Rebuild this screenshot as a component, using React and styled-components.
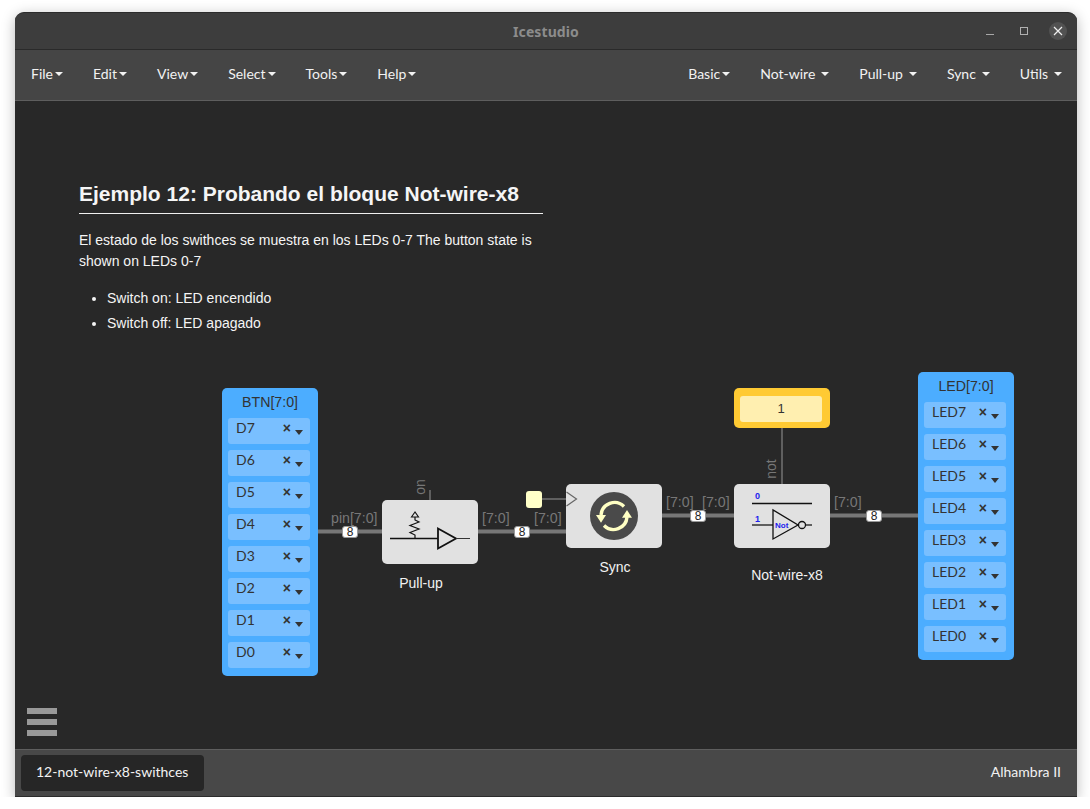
import React from 'react';
import styled, { createGlobalStyle } from 'styled-components';

const LEFT_MENU = ['File', 'Edit', 'View', 'Select', 'Tools', 'Help'];
const RIGHT_MENU = [
  { name: 'Basic', spaced: false },
  { name: 'Not-wire', spaced: true },
  { name: 'Pull-up', spaced: true },
  { name: 'Sync', spaced: true },
  { name: 'Utils', spaced: true },
];
const BTN_PINS = ['D7', 'D6', 'D5', 'D4', 'D3', 'D2', 'D1', 'D0'];
const LED_PINS = ['LED7', 'LED6', 'LED5', 'LED4', 'LED3', 'LED2', 'LED1', 'LED0'];

const BUS_LABELS = [
  { text: 'pin[7:0]', x: 316, y: 408 },
  { text: '[7:0]', x: 467, y: 408 },
  { text: '[7:0]', x: 519, y: 408 },
  { text: '[7:0]', x: 651, y: 392 },
  { text: '[7:0]', x: 687, y: 392 },
  { text: '[7:0]', x: 819, y: 392 },
];
const BADGES = [
  { x: 327, y: 425 },
  { x: 499, y: 425 },
  { x: 675, y: 409 },
  { x: 851, y: 409 },
];

const GlobalStyle = createGlobalStyle`
  html, body {
    margin: 0;
    padding: 0;
    background: #fff;
  }
  * {
    box-sizing: border-box;
  }
`;

function Wires() {
  return (
    <WireLayer width="1060" height="648" viewBox="0 0 1060 648">
      <g stroke="#777" strokeWidth="4" fill="none">
        <path d="M303 430.500H367" />
        <path d="M463 430.500H551" />
        <path d="M647 414.500H719" />
        <path d="M815 414.500H903" />
      </g>
      <g stroke="#5f5f5f" strokeWidth="2" fill="none">
        <path d="M415 389V399" />
        <path d="M767 327V383" />
        <path d="M527 398H551" />
      </g>
    </WireLayer>
  );
}

function PortBlock({ title, pins, x, y }) {
  return (
    <Port $x={x} $y={y}>
      <PortTitle>{title}</PortTitle>
      {pins.map((pin) => (
        <PinRow key={pin}>
          <PinName>{pin}</PinName>
          <PinClear>×</PinClear>
          <PinCaret />
        </PinRow>
      ))}
    </Port>
  );
}

function PullUpIcon() {
  return (
    <svg width="96" height="64" viewBox="0 0 96 64">
      <g fill="none" stroke="#111">
        <path d="M8 38.500H56" strokeWidth="1.500" />
        <path d="M56 28.500V48.500L74 38.500Z" strokeWidth="1.800" />
        <path d="M74 38.500H88" strokeWidth="1" stroke="#333" />
        <path d="M33 38V35L28 32.500L37 29L28 25.500L37 22L33 20V17" strokeWidth="1.200" />
        <path d="M33 12L29.500 17H36.500Z" strokeWidth="1.100" />
      </g>
    </svg>
  );
}

function SyncIcon() {
  return (
    <svg width="48" height="48" viewBox="0 0 48 48">
      <circle cx="24" cy="24" r="24" fill="#4a4a4a" />
      <g fill="none" stroke="#ffffc4" strokeWidth="3.400">
        <path d="M11 23A13.500 13.500 0 0 1 34 14.500" />
        <path d="M37 25A13.500 13.500 0 0 1 14 33.500" />
      </g>
      <path d="M6 23H16L11 30.700Z" fill="#ffffc4" />
      <path d="M32 25.700H42L37 18Z" fill="#ffffc4" />
    </svg>
  );
}

function NotIcon() {
  return (
    <svg width="96" height="64" viewBox="0 0 96 64">
      <path d="M18 19.500H78" stroke="#111" strokeWidth="1.300" fill="none" />
      <path d="M18 41H39" stroke="#333" strokeWidth="1.500" fill="none" />
      <path d="M39 26V55L64 41Z" stroke="#111" strokeWidth="1.300" fill="none" />
      <circle cx="68" cy="41" r="3.500" stroke="#111" strokeWidth="1.300" fill="none" />
      <path d="M72 41H78" stroke="#333" strokeWidth="1.500" fill="none" />
      <SvgBlue x="21" y="15" $size={9}>0</SvgBlue>
      <SvgBlue x="21" y="38" $size={9}>1</SvgBlue>
      <SvgBlue x="41" y="44" $size={8}>Not</SvgBlue>
    </svg>
  );
}

export default function App() {
  return (
    <>
      <GlobalStyle />
      <Window>
        <TitleBar>
          <AppTitle>Icestudio</AppTitle>
          <WindowControls>
            <MinimizeBtn />
            <MaximizeBtn />
            <CloseBtn>
              <svg width="10" height="10" viewBox="0 0 10 10">
                <path d="M1 1L9 9M9 1L1 9" stroke="#f0f0f0" strokeWidth="1.200" />
              </svg>
            </CloseBtn>
          </WindowControls>
        </TitleBar>
        <MenuBar>
          <MenuGroup $inset>
            {LEFT_MENU.map((item) => (
              <MenuItem key={item}>
                {item}
                <Caret />
              </MenuItem>
            ))}
          </MenuGroup>
          <MenuGroup>
            {RIGHT_MENU.map(({ name, spaced }) => (
              <MenuItem key={name} $spaced={spaced}>
                {name}
                <Caret />
              </MenuItem>
            ))}
          </MenuGroup>
        </MenuBar>
        <Canvas>
          <Wires />
          <Note>
            <NoteTitle>Ejemplo 12: Probando el bloque Not-wire-x8</NoteTitle>
            <NoteText>
              El estado de los swithces se muestra en los LEDs 0-7 The button state is shown on
              LEDs 0-7
            </NoteText>
            <NoteList>
              <li>Switch on: LED encendido</li>
              <li>Switch off: LED apagado</li>
            </NoteList>
          </Note>

          <PortBlock title="BTN[7:0]" pins={BTN_PINS} x={207} y={287} />
          <PortBlock title="LED[7:0]" pins={LED_PINS} x={903} y={271} />

          <Constant>
            <ConstantValue>1</ConstantValue>
          </Constant>

          <Chip $x={367} $y={399}>
            <PullUpIcon />
          </Chip>
          <Chip $x={551} $y={383}>
            <SyncIcon />
          </Chip>
          <Chip $x={719} $y={383}>
            <NotIcon />
          </Chip>

          <ChipLabel $x={406} $y={473}>Pull-up</ChipLabel>
          <ChipLabel $x={600} $y={457}>Sync</ChipLabel>
          <ChipLabel $x={772} $y={465}>Not-wire-x8</ChipLabel>

          {BUS_LABELS.map(({ text, x, y }) => (
            <BusLabel key={`${text}-${x}`} $x={x} $y={y}>
              {text}
            </BusLabel>
          ))}
          <SideLabel $x={405} $y={378}>on</SideLabel>
          <SideLabel $x={756} $y={360}>not</SideLabel>

          {BADGES.map(({ x, y }) => (
            <Badge key={x} $x={x} $y={y}>
              8
            </Badge>
          ))}

          <ClockSource />
          <ClockArrow width="12" height="16" viewBox="0 0 12 16">
            <path d="M0.500 1L10.500 8L0.500 15" fill="none" stroke="#666" strokeWidth="1.200" />
          </ClockArrow>

          <Hamburger>
            <span />
            <span />
            <span />
          </Hamburger>
        </Canvas>
        <Footer>
          <FileTab>12-not-wire-x8-swithces</FileTab>
          <BoardName>Alhambra II</BoardName>
        </Footer>
      </Window>
    </>
  );
}

const Window = styled.div`
  margin: 12px 0 0 15px;
  width: 1062px;
  height: 785px;
  display: flex;
  flex-direction: column;
  overflow: hidden;
  border-radius: 9px 9px 0 0;
  box-shadow: 0 3px 14px rgba(0, 0, 0, 0.28);
  background: #282828;
  border-top: 1px solid #2c2c2c;
  border-bottom: 1px solid #2c2c2c;
`;
const TitleBar = styled.div`
  position: relative;
  height: 37px;
  flex: none;
  display: flex;
  align-items: center;
  justify-content: center;
  background: #3d3d3d;
  border-bottom: 1px solid #2a2a2a;
`;
const AppTitle = styled.div`
  font-family: 'Noto Sans', sans-serif;
  font-size: 14px;
  font-weight: 700;
  color: #8c8c8c;
  letter-spacing: 0.1px;
`;
const WindowControls = styled.div`
  position: absolute;
  right: 0;
  top: 0;
  bottom: 0;
  display: flex;
  align-items: center;
  padding-right: 10px;
`;
const MinimizeBtn = styled.span`
  display: block;
  width: 8px;
  height: 1px;
  margin: 6px 26px 0 0;
  background: #a8a8a8;
`;
const MaximizeBtn = styled.span`
  display: block;
  width: 8px;
  height: 8px;
  margin-right: 21px;
  border: 1px solid #b0b0b0;
`;
const CloseBtn = styled.span`
  width: 18px;
  height: 18px;
  border-radius: 50%;
  background: #525252;
  display: flex;
  align-items: center;
  justify-content: center;
`;
const MenuBar = styled.div`
  height: 51px;
  flex: none;
  display: flex;
  justify-content: space-between;
  background: #454545;
  border-bottom: 1px solid #5e5e5e;
`;
const MenuGroup = styled.div`
  display: flex;
  padding-left: ${(p) => (p.$inset ? '1px' : '0')};
`;
const MenuItem = styled.div`
  display: flex;
  align-items: center;
  padding: 0 15px 4px;
  font-family: 'Lato', sans-serif;
  font-size: 14px;
  color: #f2f2f2;
  & > span {
    margin-left: ${(p) => (p.$spaced ? '6px' : '2px')};
  }
`;
const Caret = styled.span`
  display: inline-block;
  width: 0;
  height: 0;
  margin-top: 2px;
  border-top: 4px solid #f2f2f2;
  border-left: 4px solid transparent;
  border-right: 4px solid transparent;
`;
const Canvas = styled.div`
  position: relative;
  flex: 1;
  background: #282828;
`;
const WireLayer = styled.svg`
  position: absolute;
  left: 0;
  top: 0;
`;
const Note = styled.div`
  position: absolute;
  left: 64px;
  top: 80px;
  width: 464px;
  font-family: 'Liberation Sans', sans-serif;
  font-size: 14px;
  line-height: 21px;
  color: #f5f5f5;
`;
const NoteTitle = styled.h1`
  margin: 0 0 16px;
  padding-bottom: 6px;
  font-size: 21px;
  line-height: 26px;
  font-weight: 700;
  border-bottom: 1px solid #f0f0f0;
`;
const NoteText = styled.p`
  margin: 0 0 16px;
`;
const NoteList = styled.ul`
  margin: 0;
  padding-left: 28px;
  li {
    margin-bottom: 4px;
  }
`;
const Port = styled.div`
  position: absolute;
  left: ${(p) => p.$x}px;
  top: ${(p) => p.$y}px;
  width: 96px;
  height: 288px;
  padding: 0 8px 0 6px;
  border-radius: 5px;
  background: #4cadff;
  font-family: 'Lato', sans-serif;
  font-size: 14px;
  color: #333;
`;
const PortTitle = styled.div`
  height: 30px;
  padding: 5px 0 0 2px;
  text-align: center;
  line-height: 18px;
  font-family: 'Liberation Sans', sans-serif;
  font-size: 14.200px;
`;
const PinRow = styled.div`
  position: relative;
  height: 26px;
  margin-bottom: 6px;
  border-radius: 3px;
  background: #79bfff;
`;
const PinName = styled.span`
  position: absolute;
  left: 8px;
  top: 1px;
  line-height: 18px;
`;
const PinClear = styled.span`
  position: absolute;
  right: 19px;
  top: 1px;
  font-family: 'Liberation Sans', sans-serif;
  font-weight: 700;
  font-size: 14px;
  line-height: 18px;
`;
const PinCaret = styled.span`
  position: absolute;
  right: 7px;
  top: 12px;
  width: 0;
  height: 0;
  border-top: 5px solid #333;
  border-left: 4px solid transparent;
  border-right: 4px solid transparent;
`;
const Constant = styled.div`
  position: absolute;
  left: 719px;
  top: 287px;
  width: 96px;
  height: 40px;
  padding: 8px 8px 6px 6px;
  border-radius: 5px;
  background: #ffca33;
`;
const ConstantValue = styled.div`
  height: 26px;
  border-radius: 3px;
  background: #ffefb0;
  text-align: center;
  font-family: 'Liberation Sans', sans-serif;
  font-size: 13px;
  line-height: 26px;
  color: #333;
`;
const Chip = styled.div`
  position: absolute;
  left: ${(p) => p.$x}px;
  top: ${(p) => p.$y}px;
  width: 96px;
  height: 64px;
  border-radius: 5px;
  background: #e1e1e1;
  display: flex;
  align-items: center;
  justify-content: center;
  svg {
    display: block;
  }
`;
const SvgBlue = styled.text`
  font-family: 'Liberation Sans', sans-serif;
  font-size: ${(p) => p.$size}px;
  font-weight: 700;
  fill: #2222ee;
`;
const ChipLabel = styled.div`
  position: absolute;
  left: ${(p) => p.$x}px;
  top: ${(p) => p.$y}px;
  width: 0;
  display: flex;
  justify-content: center;
  white-space: nowrap;
  font-family: 'Liberation Sans', sans-serif;
  font-size: 14px;
  line-height: 18px;
  color: #f2f2f2;
`;
const BusLabel = styled.div`
  position: absolute;
  left: ${(p) => p.$x}px;
  top: ${(p) => p.$y}px;
  font-family: 'Liberation Sans', sans-serif;
  font-size: 14.200px;
  line-height: 18px;
  color: #777;
  white-space: nowrap;
`;
const SideLabel = styled.div`
  position: absolute;
  left: ${(p) => p.$x}px;
  top: ${(p) => p.$y}px;
  width: 0;
  display: flex;
  justify-content: center;
  transform: rotate(-90deg);
  font-family: 'Liberation Sans', sans-serif;
  font-size: 14px;
  line-height: 16px;
  color: #777;
`;
const Badge = styled.div`
  position: absolute;
  left: ${(p) => p.$x}px;
  top: ${(p) => p.$y}px;
  width: 16px;
  height: 12px;
  border-radius: 3px;
  background: #fff;
  border: 1px solid #999;
  font-family: 'Liberation Sans', sans-serif;
  font-size: 12px;
  line-height: 10px;
  text-align: center;
  color: #222;
`;
const ClockSource = styled.div`
  position: absolute;
  left: 511px;
  top: 390px;
  width: 16px;
  height: 17px;
  border-radius: 3px;
  background: #ffffc8;
`;
const ClockArrow = styled.svg`
  position: absolute;
  left: 551px;
  top: 390px;
`;
const Hamburger = styled.div`
  position: absolute;
  left: 12px;
  top: 607px;
  width: 30px;
  display: flex;
  flex-direction: column;
  gap: 5px;
  span {
    display: block;
    height: 6px;
    background: #999;
  }
`;
const Footer = styled.div`
  height: 47px;
  flex: none;
  display: flex;
  align-items: center;
  justify-content: space-between;
  padding: 0 16px 0 6px;
  background: #484848;
  border-top: 1px solid #5e5e5e;
  font-family: 'Lato', sans-serif;
  font-size: 14px;
  color: #f2f2f2;
`;
const FileTab = styled.div`
  width: 183px;
  height: 36px;
  padding-left: 15px;
  border-radius: 4px;
  background: #262626;
  line-height: 33px;
`;
const BoardName = styled.div`
  line-height: 16px;
  margin-bottom: 2px;
`;
